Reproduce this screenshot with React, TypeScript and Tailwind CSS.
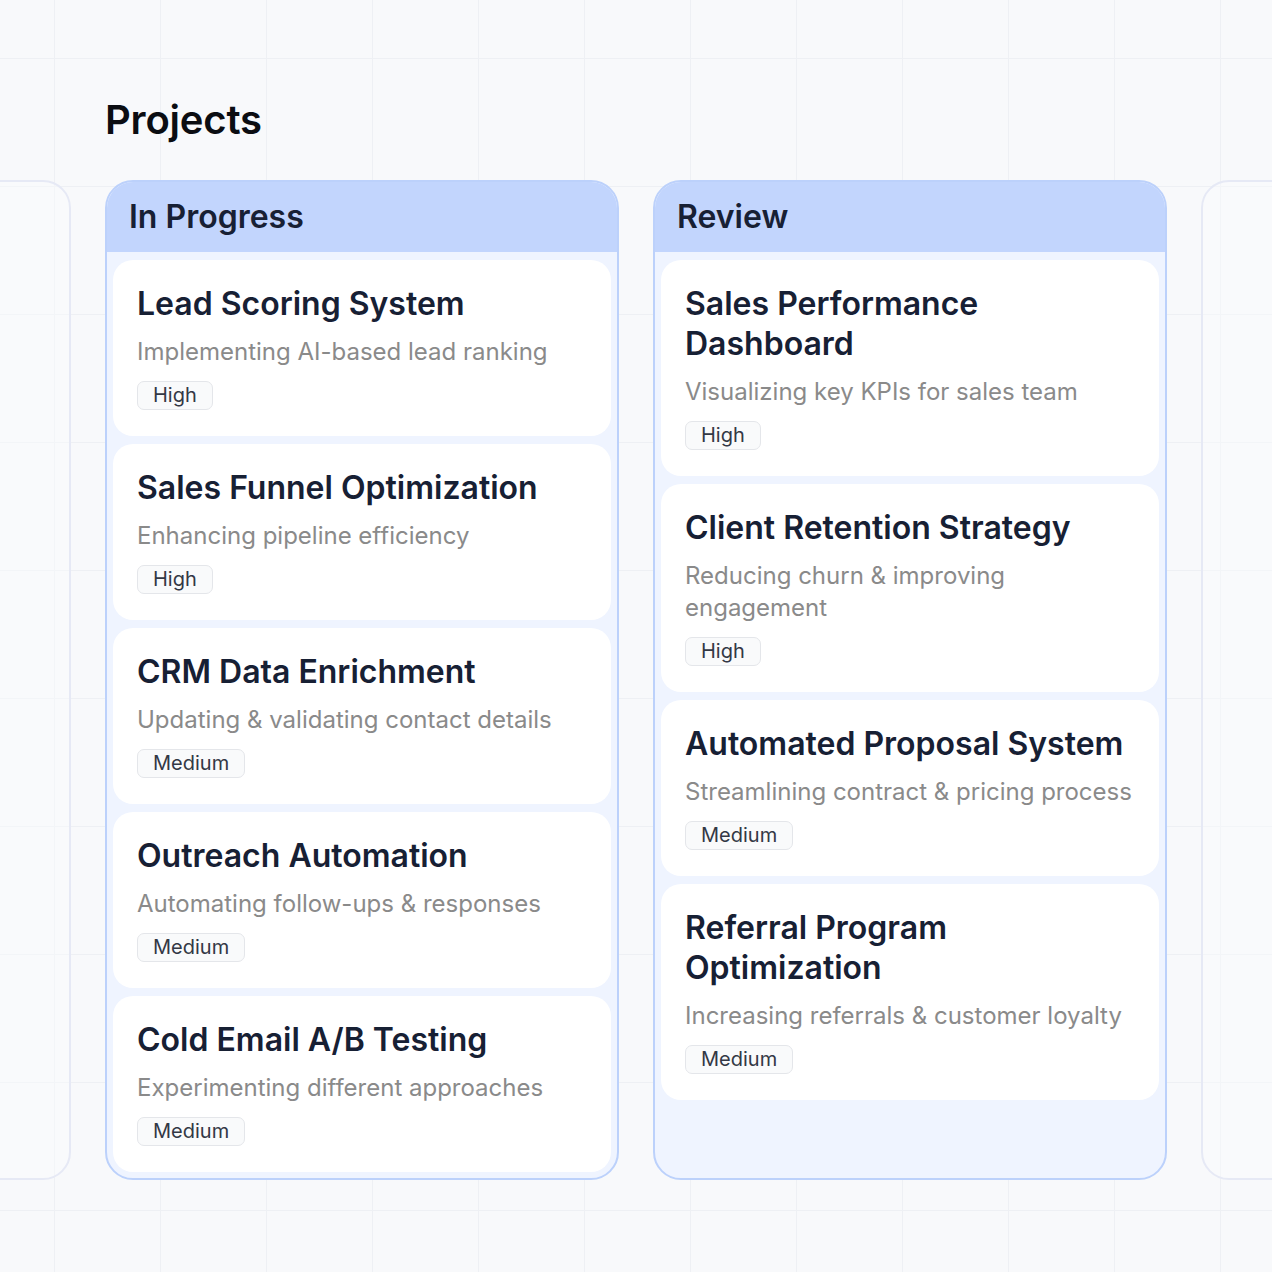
import React from "react";

type Card = { title: string; desc: string; priority: string };

const inProgress: Card[] = [
  { title: "Lead Scoring System", desc: "Implementing AI-based lead ranking", priority: "High" },
  { title: "Sales Funnel Optimization", desc: "Enhancing pipeline efficiency", priority: "High" },
  { title: "CRM Data Enrichment", desc: "Updating & validating contact details", priority: "Medium" },
  { title: "Outreach Automation", desc: "Automating follow-ups & responses", priority: "Medium" },
  { title: "Cold Email A/B Testing", desc: "Experimenting different approaches", priority: "Medium" },
];

const review: Card[] = [
  { title: "Sales Performance Dashboard", desc: "Visualizing key KPIs for sales team", priority: "High" },
  { title: "Client Retention Strategy", desc: "Reducing churn & improving engagement", priority: "High" },
  { title: "Automated Proposal System", desc: "Streamlining contract & pricing process", priority: "Medium" },
  { title: "Referral Program Optimization", desc: "Increasing referrals & customer loyalty", priority: "Medium" },
];

function TaskCard({ card }: { card: Card }) {
  return (
    <div className="shrink-0 rounded-[20px] bg-white pl-6 pr-4 pt-6 pb-[26px]">
      <h3 className="pr-2 text-[32px] font-semibold leading-[40px] text-[#172034]">{card.title}</h3>
      <p className="mt-3 text-[24px] leading-[32px] text-[#8a8a8a]">{card.desc}</p>
      <div className="mt-[13px] flex">
        <span className="rounded-[7px] border border-[#e4e6ea] bg-[#f9fafb] px-[15px] text-[20px] leading-[27px] text-[#333845]">
          {card.priority}
        </span>
      </div>
    </div>
  );
}

function Column({ title, cards }: { title: string; cards: Card[] }) {
  return (
    <div className="flex h-[1000px] w-[514px] shrink-0 flex-col overflow-hidden rounded-[28px] border-2 border-[#bcd1fb] bg-[#eff4ff]">
      <div className="flex h-[70px] shrink-0 items-center bg-[#c2d5fd] pl-[22px]">
        <h2 className="text-[32px] font-semibold leading-[40px] text-[#172034]">{title}</h2>
      </div>
      <div className="flex flex-col gap-2 px-[6px] pt-2">
        {cards.map((c) => (
          <TaskCard key={c.title} card={c} />
        ))}
      </div>
    </div>
  );
}

function GhostColumn() {
  return <div className="h-[1000px] w-[514px] shrink-0 rounded-[28px] border-2 border-[#e6e9f5] bg-[#fbfcfe]/40" />;
}

export default function App() {
  return (
    <div
      className="relative h-[1272px] w-[1272px] overflow-hidden bg-[#f8f9fb] bg-[linear-gradient(to_right,#eef0f4_1px,transparent_1px),linear-gradient(to_bottom,#eef0f4_1px,transparent_1px)] bg-[size:106px_128px] bg-[position:54px_58px]"
      style={{ fontFamily: "Inter, 'Noto Sans', sans-serif" }}
    >
      <div className="pl-[105px] pt-[96px]">
        <h1 className="text-[40px] font-semibold leading-[48px] tracking-[-0.2px] text-[#0b0d12]">Projects</h1>
        <div className="ml-[-548px] mt-[36px] flex gap-[34px]">
          <GhostColumn />
          <Column title="In Progress" cards={inProgress} />
          <Column title="Review" cards={review} />
          <GhostColumn />
        </div>
      </div>
    </div>
  );
}
